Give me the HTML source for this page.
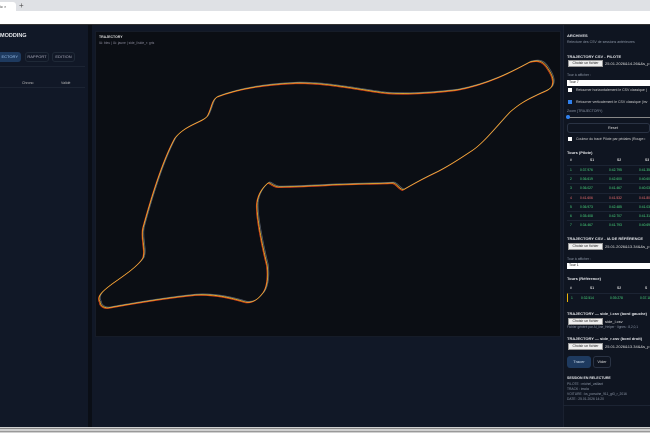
<!DOCTYPE html>
<html><head><meta charset="utf-8"><style>
*{margin:0;padding:0;box-sizing:border-box}
body{width:650px;height:433px;overflow:hidden;background:#0f1521;font-family:"Liberation Sans",sans-serif;position:relative;color:#cbd5e1}
.a{position:absolute;white-space:nowrap}
.t{font-size:4px;color:#e5e7eb;font-weight:bold}
.s{font-size:3.5px;color:#8b95a5}
.f{position:absolute;left:568px;width:35px;height:7px;background:#eee;border:1px solid #999;font-size:3.5px;color:#222;text-align:center;line-height:5px}
.fn{position:absolute;left:605px;font-size:4px;color:#ddd}
.g{color:#4ade80}.r{color:#f87171}
.row{position:absolute;left:567px;width:83px;font-size:3.3px;height:9px;border-top:1px solid #1c2433}
.row span{position:absolute;top:2px}
</style></head><body>
<div class="a" style="left:0;top:0;width:650px;height:11px;background:#dfe1e5"></div>
<div class="a" style="left:0;top:2px;width:16px;height:9px;background:#fff;border-radius:0 3px 0 0;font-size:4px;color:#444;padding:2px 0 0 0">ic ×</div>
<div class="a" style="left:19px;top:1px;font-size:8px;color:#555">+</div>
<div class="a" style="left:0;top:11px;width:650px;height:13px;background:#fff"></div>
<div class="a" style="left:0;top:24px;width:650px;height:1px;background:#333"></div>
<div class="a" style="left:0;top:25px;width:88px;height:402px;background:#111827"></div>
<div class="a" style="left:88px;top:25px;width:4px;height:402px;background:#0a0e16"></div>
<div class="a" style="left:0;top:33px;font-size:5.5px;font-weight:bold;color:#e5e7eb">MODDING</div>
<div class="a" style="left:0;top:52px;width:21px;height:10px;background:#1e3a5f;border-radius:0 3px 3px 0;font-size:4px;color:#9cc3f0;line-height:10px;text-align:right;padding-right:3px">ECTORY</div>
<div class="a" style="left:25px;top:52px;width:24px;height:10px;border:1px solid #1f2937;border-radius:3px;font-size:4px;color:#aab;line-height:8px;text-align:center">RAPPORT</div>
<div class="a" style="left:52px;top:52px;width:23px;height:10px;border:1px solid #1f2937;border-radius:3px;font-size:4px;color:#aab;line-height:8px;text-align:center">EDITION</div>
<div class="a" style="left:0;top:66px;width:85px;height:1px;background:#1c2433"></div>
<div class="a" style="left:22px;top:81px;font-size:3.5px;color:#bbb">Chrono</div>
<div class="a" style="left:61px;top:81px;font-size:3.5px;color:#bbb">Validé</div>
<div class="a" style="left:0;top:87px;width:85px;height:1px;background:#1c2433"></div>
<div class="a" style="left:92px;top:25px;width:471px;height:402px;background:#111827"></div>
<div class="a" style="left:95px;top:31px;width:466px;height:306px;background:#0b0e14;border:1px solid #161c28"></div>
<div class="a" style="left:99px;top:35px;font-size:3.5px;font-weight:bold;color:#ddd">TRAJECTORY</div>
<div class="a" style="left:99px;top:41px;font-size:3.3px;color:#889">IA: bleu | IA: jaune | side_l/side_r: gris</div>
<svg class="a" style="left:0;top:0" width="650" height="433" fill="none" stroke-linejoin="round" stroke-linecap="round">
<defs><path id="tr" d="M100,302 C96,296 104,290 112,284 C125,275 138,266 143,258 C146,250 141,240 143,228 C152,195 163,160 175,138 C186,124 205,122 208,115 C212,107 212,100 217,97 C240,88 270,84 298,83 C330,83 360,90 385,93 C410,95 440,92 457,90 C490,84 515,70 530,62 C538,60 542,61 546,66 C551,73 555,80 552,86 C550,90 545,91 535,96 C520,103 515,108 510,112 C495,128 482,145 470,152 C455,162 445,168 437,172 C420,180 410,186 403,190 C398,188 397,184 393,183 C370,184 350,184 330,185 C310,186 290,187 278,187 C272,186 270,182 268,183 C262,188 258,195 257,203 C256,215 262,245 267,265 C269,280 266,290 262,294 C256,302 250,303 245,302 C225,296 210,294 195,295 C165,298 130,304 108,308 C103,308 100,305 100,302 Z"/></defs>
<use href="#tr" stroke="#5b6372" stroke-width="0.7" transform="translate(1.2,-0.9)"/>
<use href="#tr" stroke="#e0401e" stroke-width="0.7" transform="translate(-0.6,0.6)"/>
<use href="#tr" stroke="#f59e0b" stroke-width="0.6"/>
<use href="#tr" stroke="#f4d35e" stroke-width="0.4" transform="translate(0.3,-0.3)"/>
</svg>
<div class="a" style="left:563px;top:25px;width:87px;height:402px;background:#0f1521;border-left:1px solid #1a2130"></div>
<div class="a t" style="left:567px;top:33px">ARCHIVES</div>
<div class="a s" style="left:567px;top:40px">Relecture des CSV de sessions antérieures</div>
<div class="a t" style="left:567px;top:54px">TRAJECTORY CSV - PILOTE</div>
<div class="f" style="top:60px">Choisir un fichier</div><div class="fn" style="top:61px">25.01.2026&14.26&&s_p</div>
<div class="a s" style="left:567px;top:73px">Tour à afficher :</div>
<div class="a" style="left:567px;top:80px;width:83px;height:6px;background:#fff;font-size:3.5px;color:#222;padding-left:2px">Tour 7</div>
<div class="a" style="left:568px;top:88px;width:4px;height:4px;background:#fff"></div>
<div class="a s" style="left:576px;top:88px;color:#ccc">Retourner horizontalement le CSV classique (</div>
<div class="a" style="left:568px;top:100px;width:4px;height:4px;background:#2f80ed"></div>
<div class="a s" style="left:576px;top:100px;color:#ccc">Retourner verticalement le CSV classique (inv</div>
<div class="a s" style="left:567px;top:109px">Zoom (TRAJECTORY)</div>
<div class="a" style="left:569px;top:117px;width:81px;height:1px;background:#888"></div>
<div class="a" style="left:566px;top:115px;width:4px;height:4px;border-radius:50%;background:#2f80ed"></div>
<div class="a" style="left:567px;top:123px;width:83px;height:10px;border:1px solid #2a3344;border-radius:3px;font-size:3.8px;color:#ddd;line-height:8px;padding-left:40px">Reset</div>
<div class="a" style="left:568px;top:137px;width:4px;height:4px;background:#fff"></div>
<div class="a s" style="left:576px;top:137px;color:#ccc">Couleur du tracé Pilote par pédales (Rouge=</div>
<div class="a t" style="left:567px;top:150px">Tours (Pilote)</div>
<div class="row" style="top:156px;border:0;color:#ddd;font-weight:bold"><span style="left:3px">#</span><span style="left:23px">S1</span><span style="left:50px">S2</span><span style="left:78px">S3</span></div>
<div class="row g" style="top:165px"><span style="left:3px">1</span><span style="left:13px">0:37.976</span><span style="left:42px">0:42.795</span><span style="left:72px">0:41.353</span></div>
<div class="row g" style="top:174px"><span style="left:3px">2</span><span style="left:13px">0:36.619</span><span style="left:42px">0:42.600</span><span style="left:72px">0:40.609</span></div>
<div class="row g" style="top:183px"><span style="left:3px">3</span><span style="left:13px">0:36.027</span><span style="left:42px">0:41.467</span><span style="left:72px">0:40.034</span></div>
<div class="row r" style="top:193px"><span style="left:3px">4</span><span style="left:13px">0:41.606</span><span style="left:42px">0:41.532</span><span style="left:72px">0:41.807</span></div>
<div class="row g" style="top:202px"><span style="left:3px">5</span><span style="left:13px">0:36.973</span><span style="left:42px">0:42.485</span><span style="left:72px">0:41.039</span></div>
<div class="row g" style="top:211px"><span style="left:3px">6</span><span style="left:13px">0:35.408</span><span style="left:42px">0:42.707</span><span style="left:72px">0:41.312</span></div>
<div class="row g" style="top:220px"><span style="left:3px">7</span><span style="left:13px">0:34.467</span><span style="left:42px">0:41.793</span><span style="left:72px">0:40.698</span></div>
<div class="a t" style="left:567px;top:236px">TRAJECTORY CSV - IA DE RÉFÉRENCE</div>
<div class="f" style="top:243px">Choisir un fichier</div><div class="fn" style="top:244px">25.01.2026&13.34&&s_p</div>
<div class="a s" style="left:567px;top:257px">Tour à afficher :</div>
<div class="a" style="left:567px;top:263px;width:83px;height:6px;background:#fff;font-size:3.5px;color:#222;padding-left:2px">Tour 1</div>
<div class="a t" style="left:567px;top:276px">Tours (Référence)</div>
<div class="row" style="top:284px;border:0;color:#ddd;font-weight:bold"><span style="left:3px">#</span><span style="left:23px">S1</span><span style="left:50px">S2</span><span style="left:78px">S</span></div>
<div class="row g" style="top:293px;border-left:1px solid #eab308"><span style="left:3px">1</span><span style="left:13px">0:32.514</span><span style="left:42px">0:39.278</span><span style="left:72px">0:37.18</span></div>
<div class="a t" style="left:567px;top:311px">TRAJECTORY — side_l.csv (bord gauche)</div>
<div class="f" style="top:318px">Choisir un fichier</div><div class="fn" style="top:319px">side_l.csv</div>
<div class="a s" style="left:567px;top:325px;font-size:3.2px">Fichier généré par AI_line_Helper · lignes : 8,2,0,1</div>
<div class="a t" style="left:567px;top:336px">TRAJECTORY — side_r.csv (bord droit)</div>
<div class="f" style="top:343px">Choisir un fichier</div><div class="fn" style="top:344px">25.01.2026&13.34&&s_p</div>
<div class="a" style="left:567px;top:356px;width:24px;height:12px;background:#1e3a5f;border-radius:3px;font-size:4px;color:#cde;line-height:12px;text-align:center">Tracer</div>
<div class="a" style="left:593px;top:356px;width:18px;height:12px;border:1px solid #2a3344;border-radius:3px;font-size:4px;color:#ddd;line-height:10px;text-align:center">Vider</div>
<div class="a t" style="left:567px;top:376px;font-size:3.5px">SESSION EN RELECTURE</div>
<div class="a s" style="left:567px;top:382px;font-size:3.3px">PILOTE : michel_vaillant</div>
<div class="a s" style="left:567px;top:387px;font-size:3.3px">TRACK : imola</div>
<div class="a s" style="left:567px;top:392px;font-size:3.3px">VOITURE : ks_porsche_911_gt3_r_2016</div>
<div class="a s" style="left:567px;top:397px;font-size:3.3px">DATE : 25.01.2026 14:20</div>
<div class="a" style="left:563px;top:405px;width:87px;height:1px;background:#1c2433"></div>
<div class="a" style="left:0;top:427px;width:650px;height:6px;background:#d0d0d0"></div>
<div class="a" style="left:0;top:428px;width:650px;height:1px;background:#888"></div>
<div class="a" style="left:0;top:431px;width:650px;height:1px;background:#999"></div>
</body></html>
